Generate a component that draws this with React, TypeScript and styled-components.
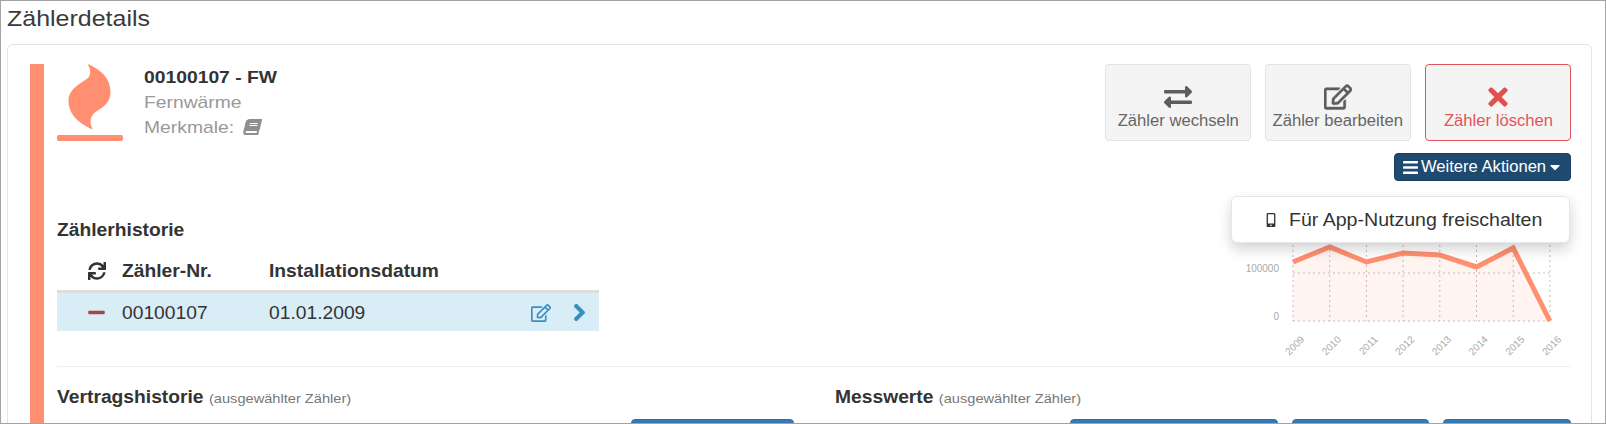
import React from "react";
import styled, { createGlobalStyle, css } from "styled-components";
import {
  FaBars,
  FaBook,
  FaCaretDown,
  FaChevronRight,
  FaExchangeAlt,
  FaMinus,
  FaMobileAlt,
  FaRegEdit,
  FaSync,
  FaTimes,
} from "react-icons/fa";

const Global = createGlobalStyle`
  html, body { margin: 0; padding: 0; background: #fff; }
  body { font-family: "Liberation Sans", Arial, sans-serif; color: #333; }
  * { box-sizing: border-box; }
`;

const stretch = (k: number, origin = "left") => css`
  display: inline-block;
  white-space: nowrap;
  transform: scaleX(${k});
  transform-origin: ${origin} center;
`;

const Frame = styled.div`
  width: 1606px;
  height: 424px;
  border: 1px solid #a3a3a3;
  overflow: hidden;
  padding: 0 13px 0 6px;
`;

const PageTitle = styled.h1`
  ${stretch(1.135)};
  display: block;
  margin: 0;
  height: 43px;
  padding-top: 5px;
  font-size: 22px;
  line-height: 26px;
  font-weight: 400;
  color: #3a3a3a;
`;

const Card = styled.section`
  border: 1px solid #e4e4e4;
  border-radius: 6px;
  padding: 19px 20px 0 22px;
  height: 400px;
`;

const Accent = styled.div`
  border-left: 14px solid #ff8f70;
  padding-left: 13px;
  height: 380px;
`;

const Header = styled.div`
  display: flex;
  justify-content: space-between;
  height: 117px;
`;

const Identity = styled.div`
  display: flex;
`;

const FlameLogo = styled.svg`
  display: block;
  width: 66px;
  height: 77px;
  margin-right: 21px;
`;

const Meta = styled.div`
  display: flex;
  flex-direction: column;
  padding-top: 1px;
  font-size: 17px;
  line-height: 25px;
`;

const MeterId = styled.strong`
  ${stretch(1.135)};
  color: #333;
`;

const MetaLine = styled.span`
  ${stretch(1.135)};
  color: #999;
`;

const BookIcon = styled(FaBook)`
  width: 15px;
  height: 16px;
  margin-left: 9px;
  vertical-align: -2px;
  transform: skewX(-12deg);
  color: #8f8f8f;
`;

const Actions = styled.div`
  position: relative;
  display: flex;
  flex-direction: column;
  align-items: flex-end;
  gap: 12px;
`;

const ActionRow = styled.div`
  display: flex;
  gap: 14px;
`;

const ActionButton = styled.button<{ $danger?: boolean }>`
  width: 146px;
  height: 77px;
  padding: 20px 0 0;
  display: flex;
  flex-direction: column;
  align-items: center;
  font-family: inherit;
  font-size: 16px;
  line-height: 18px;
  border-radius: 4px;
  border: 1px solid ${(p) => (p.$danger ? "#e0555a" : "#e3e3e3")};
  background: #f4f4f4;
  color: ${(p) => (p.$danger ? "#e2555a" : "#666")};
`;

const ActionIconSlot = styled.span`
  height: 24px;
  display: flex;
  align-items: center;
  justify-content: center;
  margin-bottom: 3px;

  svg { display: block; }
`;

const ActionLabel = styled.span`
  ${stretch(1.04, "center")};
`;

const HeavyEdit = styled(FaRegEdit)`
  stroke: currentColor;
  stroke-width: 10;
`;

const MoreButton = styled.button`
  width: 177px;
  height: 28px;
  padding: 0 7px;
  display: flex;
  align-items: center;
  background: #1f4a70;
  border: 1px solid #1a3f60;
  border-radius: 4px;
  color: #fff;
  font-family: inherit;
  font-size: 15.8px;
`;

const MoreLabel = styled.span`
  ${stretch(1.05)};
  margin-left: 2px;
`;

const Caret = styled(FaCaretDown)`
  margin-left: auto;
  width: 16px;
  height: 16px;
`;

const Menu = styled.div`
  position: absolute;
  z-index: 2;
  top: 132px;
  right: 1px;
  width: 339px;
  height: 47px;
  display: flex;
  align-items: center;
  padding-left: 32px;
  background: #fff;
  border: 1px solid #e6e6e6;
  border-radius: 6px;
  box-shadow: 0 6px 14px rgba(0, 0, 0, 0.18);
  color: #333;
`;

const MenuLabel = styled.span`
  ${stretch(1.07)};
  margin-left: 11px;
  font-size: 18.3px;
`;

const Middle = styled.div`
  display: flex;
  justify-content: space-between;
  height: 186px;
  border-bottom: 1px solid #eee;
`;

const History = styled.div`
  width: 542px;
  padding-top: 39px;
`;

const SectionTitle = styled.h2`
  ${stretch(1.1)};
  margin: 0;
  font-size: 17.5px;
  line-height: 20px;
  font-weight: 700;
  color: #333;
`;

const TableHead = styled.div`
  display: grid;
  grid-template-columns: 65px 147px 1fr;
  align-items: center;
  height: 53px;
  padding-top: 12px;
  border-bottom: 3px solid #ddd;
  font-size: 18.5px;
  font-weight: 700;
`;

const TableRow = styled.div`
  display: grid;
  grid-template-columns: 65px 147px 1fr auto;
  align-items: center;
  height: 38px;
  padding-top: 1px;
  background: #d9edf7;
  font-size: 18.5px;
`;

const Cell = styled.span`
  ${stretch(1.04)};
`;

const IconCell = styled.span<{ $color?: string }>`
  display: flex;
  justify-content: center;
  padding-left: 24px;
  padding-right: 10px;
  color: ${(p) => p.$color ?? "#333"};

  svg { display: block; }
`;

const RowTools = styled.span`
  display: flex;
  align-items: center;
  gap: 19px;
  padding-right: 10px;
  color: #3a8fc0;

  svg { display: block; }
`;

const Chevron = styled(FaChevronRight)`
  stroke: currentColor;
  stroke-width: 30;
`;

const Chart = styled.svg`
  display: block;
  width: 340px;
  height: 180px;
  margin-top: 4px;
  font-family: "Liberation Sans", Arial, sans-serif;
`;

const Lower = styled.div`
  display: grid;
  grid-template-columns: 737px 736px;
  column-gap: 41px;
  padding-top: 20px;
`;

const Sub = styled.span`
  font-size: 13.3px;
  font-weight: 400;
  color: #777;
`;

const ButtonRow = styled.div`
  display: flex;
  justify-content: flex-end;
  gap: 14px;
  margin-top: 10px;
`;

const BlueButton = styled.div<{ $w: number }>`
  width: ${(p) => p.$w}px;
  height: 36px;
  background: #337ab7;
  border: 1px solid #2e6da4;
  border-radius: 4px;
`;

const years = [2009, 2010, 2011, 2012, 2013, 2014, 2015, 2016];
const step = 36.7;
const xs = years.map((_, i) => 62 + i * step);
const vals = [77, 62, 77, 68, 70, 82, 63, 136];
const linePoints = xs.map((x, i) => `${x},${vals[i]}`).join(" ");
const areaPoints = `62,136 ${linePoints} 319,136`;

export default function App() {
  return (
    <Frame>
      <Global />
      <PageTitle>Zählerdetails</PageTitle>
      <Card>
        <Accent>
          <Header>
            <Identity>
              <FlameLogo viewBox="57 64 66 77" aria-hidden>
                <path
                  fill="#ff8f70"
                  d="M87.5 64C100 69 111 78 110.5 93C110 103 103 107 97 111C92 114 88 120 92.7 129.5C80 124 68.5 115 68.5 101C68.5 89 80 84 88 78C91 75 91 69 87.5 64Z"
                />
                <rect x="57" y="135" width="66" height="6" rx="2" fill="#ff8f70" />
              </FlameLogo>
              <Meta>
                <MeterId>00100107 - FW</MeterId>
                <MetaLine>Fernwärme</MetaLine>
                <MetaLine>
                  Merkmale:
                  <BookIcon />
                </MetaLine>
              </Meta>
            </Identity>
            <Actions>
              <ActionRow>
                <ActionButton>
                  <ActionIconSlot>
                    <FaExchangeAlt size={28} color="#5d5d5d" />
                  </ActionIconSlot>
                  <ActionLabel>Zähler wechseln</ActionLabel>
                </ActionButton>
                <ActionButton>
                  <ActionIconSlot>
                    <HeavyEdit size={28} color="#5d5d5d" />
                  </ActionIconSlot>
                  <ActionLabel>Zähler bearbeiten</ActionLabel>
                </ActionButton>
                <ActionButton $danger>
                  <ActionIconSlot>
                    <FaTimes size={28} color="#e0504f" />
                  </ActionIconSlot>
                  <ActionLabel>Zähler löschen</ActionLabel>
                </ActionButton>
              </ActionRow>
              <MoreButton>
                <FaBars size={17} />
                <MoreLabel>Weitere Aktionen</MoreLabel>
                <Caret />
              </MoreButton>
              <Menu>
                <FaMobileAlt size={14} color="#333" />
                <MenuLabel>Für App-Nutzung freischalten</MenuLabel>
              </Menu>
            </Actions>
          </Header>
          <Middle>
            <History>
              <SectionTitle>Zählerhistorie</SectionTitle>
              <TableHead>
                <IconCell>
                  <FaSync size={18} />
                </IconCell>
                <Cell>Zähler-Nr.</Cell>
                <Cell>Installationsdatum</Cell>
              </TableHead>
              <TableRow>
                <IconCell $color="#a94442">
                  <FaMinus size={19} />
                </IconCell>
                <Cell>00100107</Cell>
                <Cell>01.01.2009</Cell>
                <RowTools>
                  <FaRegEdit size={20} />
                  <Chevron size={19} />
                </RowTools>
              </TableRow>
            </History>
            <Chart viewBox="0 0 340 180" aria-hidden>
              <polygon points={areaPoints} fill="#ff8f70" fillOpacity="0.1" />
              {xs.map((x) => (
                <line key={x} x1={x} x2={x} y1="30" y2="136" stroke="#c9b9b5" strokeDasharray="2 3" />
              ))}
              <line x1="62" x2="319" y1="88" y2="88" stroke="#c9b9b5" strokeDasharray="2 3" />
              <line x1="62" x2="319" y1="136" y2="136" stroke="#c9b9b5" strokeDasharray="2 3" />
              <polyline points={linePoints} fill="none" stroke="#ff8f70" strokeWidth="5" strokeLinejoin="miter" />
              <text x="48" y="87" fontSize="10" textAnchor="end" fill="#aaa">100000</text>
              <text x="48" y="135" fontSize="10" textAnchor="end" fill="#aaa">0</text>
              {years.map((y, i) => (
                <text
                  key={y}
                  x={xs[i] + 12}
                  y="155"
                  fontSize="10"
                  textAnchor="end"
                  fill="#aaa"
                  transform={`rotate(-45 ${xs[i] + 12} 155)`}
                >
                  {y}
                </text>
              ))}
            </Chart>
          </Middle>
          <Lower>
            <div>
              <SectionTitle>
                Vertragshistorie <Sub>(ausgewählter Zähler)</Sub>
              </SectionTitle>
              <ButtonRow>
                <BlueButton $w={163} />
              </ButtonRow>
            </div>
            <div>
              <SectionTitle>
                Messwerte <Sub>(ausgewählter Zähler)</Sub>
              </SectionTitle>
              <ButtonRow>
                <BlueButton $w={208} />
                <BlueButton $w={137} />
                <BlueButton $w={128} />
              </ButtonRow>
            </div>
          </Lower>
        </Accent>
      </Card>
    </Frame>
  );
}
